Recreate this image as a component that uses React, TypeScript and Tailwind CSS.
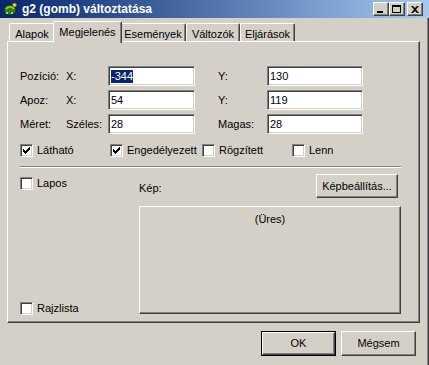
import React from "react";

const raised =
  "border border-t-white border-l-white border-r-[#404040] border-b-[#404040] shadow-[inset_-1px_-1px_0_#808080]";
const sunken =
  "border border-t-[#808080] border-l-[#808080] border-r-white border-b-white shadow-[inset_1px_1px_0_#404040,inset_-1px_-1px_0_#d4d0c8]";

function CheckBox({ checked, label }: { checked?: boolean; label: string }) {
  return (
    <div className="flex items-center h-[13px]">
      <div className={`w-[13px] h-[13px] bg-white ${sunken} flex items-center justify-center`}>
        {checked && (
          <svg width="7" height="7" viewBox="0 0 7 7">
            <path d="M0 2h1v1h1v1h1v-1h1v-1h1v-1h1v-1h1v3h-1v1h-1v1h-1v1h-1v1h-1v-1h-1v-1h-1z" fill="#000" />
          </svg>
        )}
      </div>
      <span className="ml-[4px] leading-[13px]">{label}</span>
    </div>
  );
}

function Field({ value, selected, width }: { value: string; selected?: boolean; width: string }) {
  return (
    <div className={`${width} h-[20px] bg-white ${sunken} flex items-center pl-[2px]`}>
      {selected ? (
        <span className="bg-[#0a246a] text-white leading-[13px]">{value}</span>
      ) : (
        <span className="leading-[13px]">{value}</span>
      )}
    </div>
  );
}

function FormRow({
  label,
  sub,
  value,
  label2,
  value2,
  selected,
}: {
  label: string;
  sub: string;
  value: string;
  label2: string;
  value2: string;
  selected?: boolean;
}) {
  return (
    <div className="flex items-center h-[20px]">
      <span className="w-[46px]">{label}</span>
      <span className="w-[42px]">{sub}</span>
      <Field value={value} selected={selected} width="w-[87px]" />
      <span className="ml-[23px] w-[49px]">{label2}</span>
      <Field value={value2} width="w-[96px]" />
    </div>
  );
}

const tabs = [
  { name: "Alapok", w: "w-[46px]" },
  { name: "Megjelenés", w: "w-[69px]", active: true },
  { name: "Események", w: "w-[66px]" },
  { name: "Változók", w: "w-[54px]" },
  { name: "Eljárások", w: "w-[55px]" },
];

export default function App() {
  return (
    <div className="w-[429px] h-[365px] overflow-hidden bg-[#d4d0c8] flex flex-col font-['Liberation_Sans',Arial,sans-serif] text-[11px] text-black">
      {/* Title bar */}
      <div className="h-[18px] bg-linear-to-r from-[#0a246a] to-[#a6caf0] flex items-center pl-[2px] pr-[6px]">
        <svg width="16" height="16" viewBox="0 0 16 16">
          <ellipse cx="8" cy="9" rx="6" ry="5" fill="#2f7d1c" stroke="#0d3b08" />
          <path d="M4 8c2-3 6-3 8 0" stroke="#9ed84a" strokeWidth="1.5" fill="none" />
          <circle cx="12.5" cy="4" r="2" fill="#e9d24a" stroke="#6b5a10" strokeWidth="0.7" />
          <circle cx="5" cy="12" r="1" fill="#d8e8a0" />
          <circle cx="10" cy="12" r="1" fill="#d8e8a0" />
        </svg>
        <span className="ml-[4px] text-white font-bold text-[12px] leading-[14px]">g2 (gomb) változtatása</span>
        <div className="ml-auto flex">
          <div className={`w-[16px] h-[14px] bg-[#d4d0c8] ${raised} flex items-end justify-center pb-[2px]`}>
            <div className="w-[6px] h-[2px] bg-black ml-[-2px]" />
          </div>
          <div className={`w-[16px] h-[14px] bg-[#d4d0c8] ${raised} flex items-center justify-center`}>
            <div className="w-[9px] h-[8px] border border-black border-t-2 ml-[-1px]" />
          </div>
          <div className={`ml-[2px] w-[16px] h-[14px] bg-[#d4d0c8] ${raised} flex items-center justify-center`}>
            <svg width="8" height="7" viewBox="0 0 8 7" className="ml-[-1px]">
              <path d="M0 0h2l2 2l2-2h2l-3 3.5l3 3.5h-2l-2-2l-2 2h-2l3-3.5z" fill="#000" />
            </svg>
          </div>
        </div>
      </div>

      <div className="flex flex-1">
        <div className="w-[425px] flex flex-col">
          {/* Tabs */}
          <div className="mt-[3px] ml-[9px] h-[20px] flex items-end relative z-10">
            {tabs.map((t) =>
              t.active ? (
                <div
                  key={t.name}
                  className={`${t.w} h-[22px] mb-[-2px] mx-[-2px] bg-[#d4d0c8] border-t border-l border-white border-r border-r-[#404040] shadow-[inset_-1px_0_0_#808080] rounded-t-[2px] flex items-start justify-center pt-[2px] relative z-10`}
                >
                  {t.name}
                </div>
              ) : (
                <div
                  key={t.name}
                  className={`${t.w} h-[18px] bg-[#d4d0c8] border-t border-l border-white border-r border-r-[#404040] shadow-[inset_-1px_0_0_#808080] rounded-t-[2px] flex items-start justify-center pt-[2px]`}
                >
                  {t.name}
                </div>
              )
            )}
          </div>

          {/* Tab panel */}
          <div className={`ml-[7px] w-[413px] h-[282px] ${raised} pl-[12px] pt-[24px] flex flex-col`}>
            <div className="flex flex-col gap-[4px]">
              <FormRow label="Pozíció:" sub="X:" value="-344" selected label2="Y:" value2="130" />
              <FormRow label="Apoz:" sub="X:" value="54" label2="Y:" value2="119" />
              <FormRow label="Méret:" sub="Széles:" value="28" label2="Magas:" value2="28" />
            </div>

            <div className="mt-[10px] flex">
              <div className="w-[90px]"><CheckBox checked label="Látható" /></div>
              <div className="w-[92px]"><CheckBox checked label="Engedélyezett" /></div>
              <div className="w-[90px]"><CheckBox label="Rögzített" /></div>
              <CheckBox label="Lenn" />
            </div>

            <div className="mt-[9px] w-[381px] h-[2px] border-t border-t-[#808080] border-b border-b-white" />

            <div className="mt-[6px] flex">
              <div className="w-[119px] flex flex-col justify-between">
                <div className="mt-[3px]"><CheckBox label="Lapos" /></div>
                <div className="mb-[-1px]"><CheckBox label="Rajzlista" /></div>
              </div>
              <div className="w-[262px] flex flex-col">
                <div className="h-[24px] flex items-start justify-between">
                  <span className="mt-[8px] leading-[13px]">Kép:</span>
                  <div className={`mr-[3px] w-[82px] h-[24px] ${raised} flex items-center justify-center`}>
                    Képbeállítás...
                  </div>
                </div>
                <div className={`mt-[8px] h-[108px] ${raised} flex justify-center pt-[4px]`}>(Üres)</div>
              </div>
            </div>
          </div>

          {/* Buttons */}
          <div className="mt-[8px] w-[416px] flex justify-end gap-[5px]">
            <div className="w-[75px] h-[25px] border border-black flex">
              <div className={`flex-1 ${raised} flex items-center justify-center`}>OK</div>
            </div>
            <div className={`w-[75px] h-[25px] ${raised} flex items-center justify-center`}>Mégsem</div>
          </div>
        </div>
        <div className="w-[4px] border-r border-r-[#404040] shadow-[inset_-1px_0_0_#808080]" />
      </div>
    </div>
  );
}
